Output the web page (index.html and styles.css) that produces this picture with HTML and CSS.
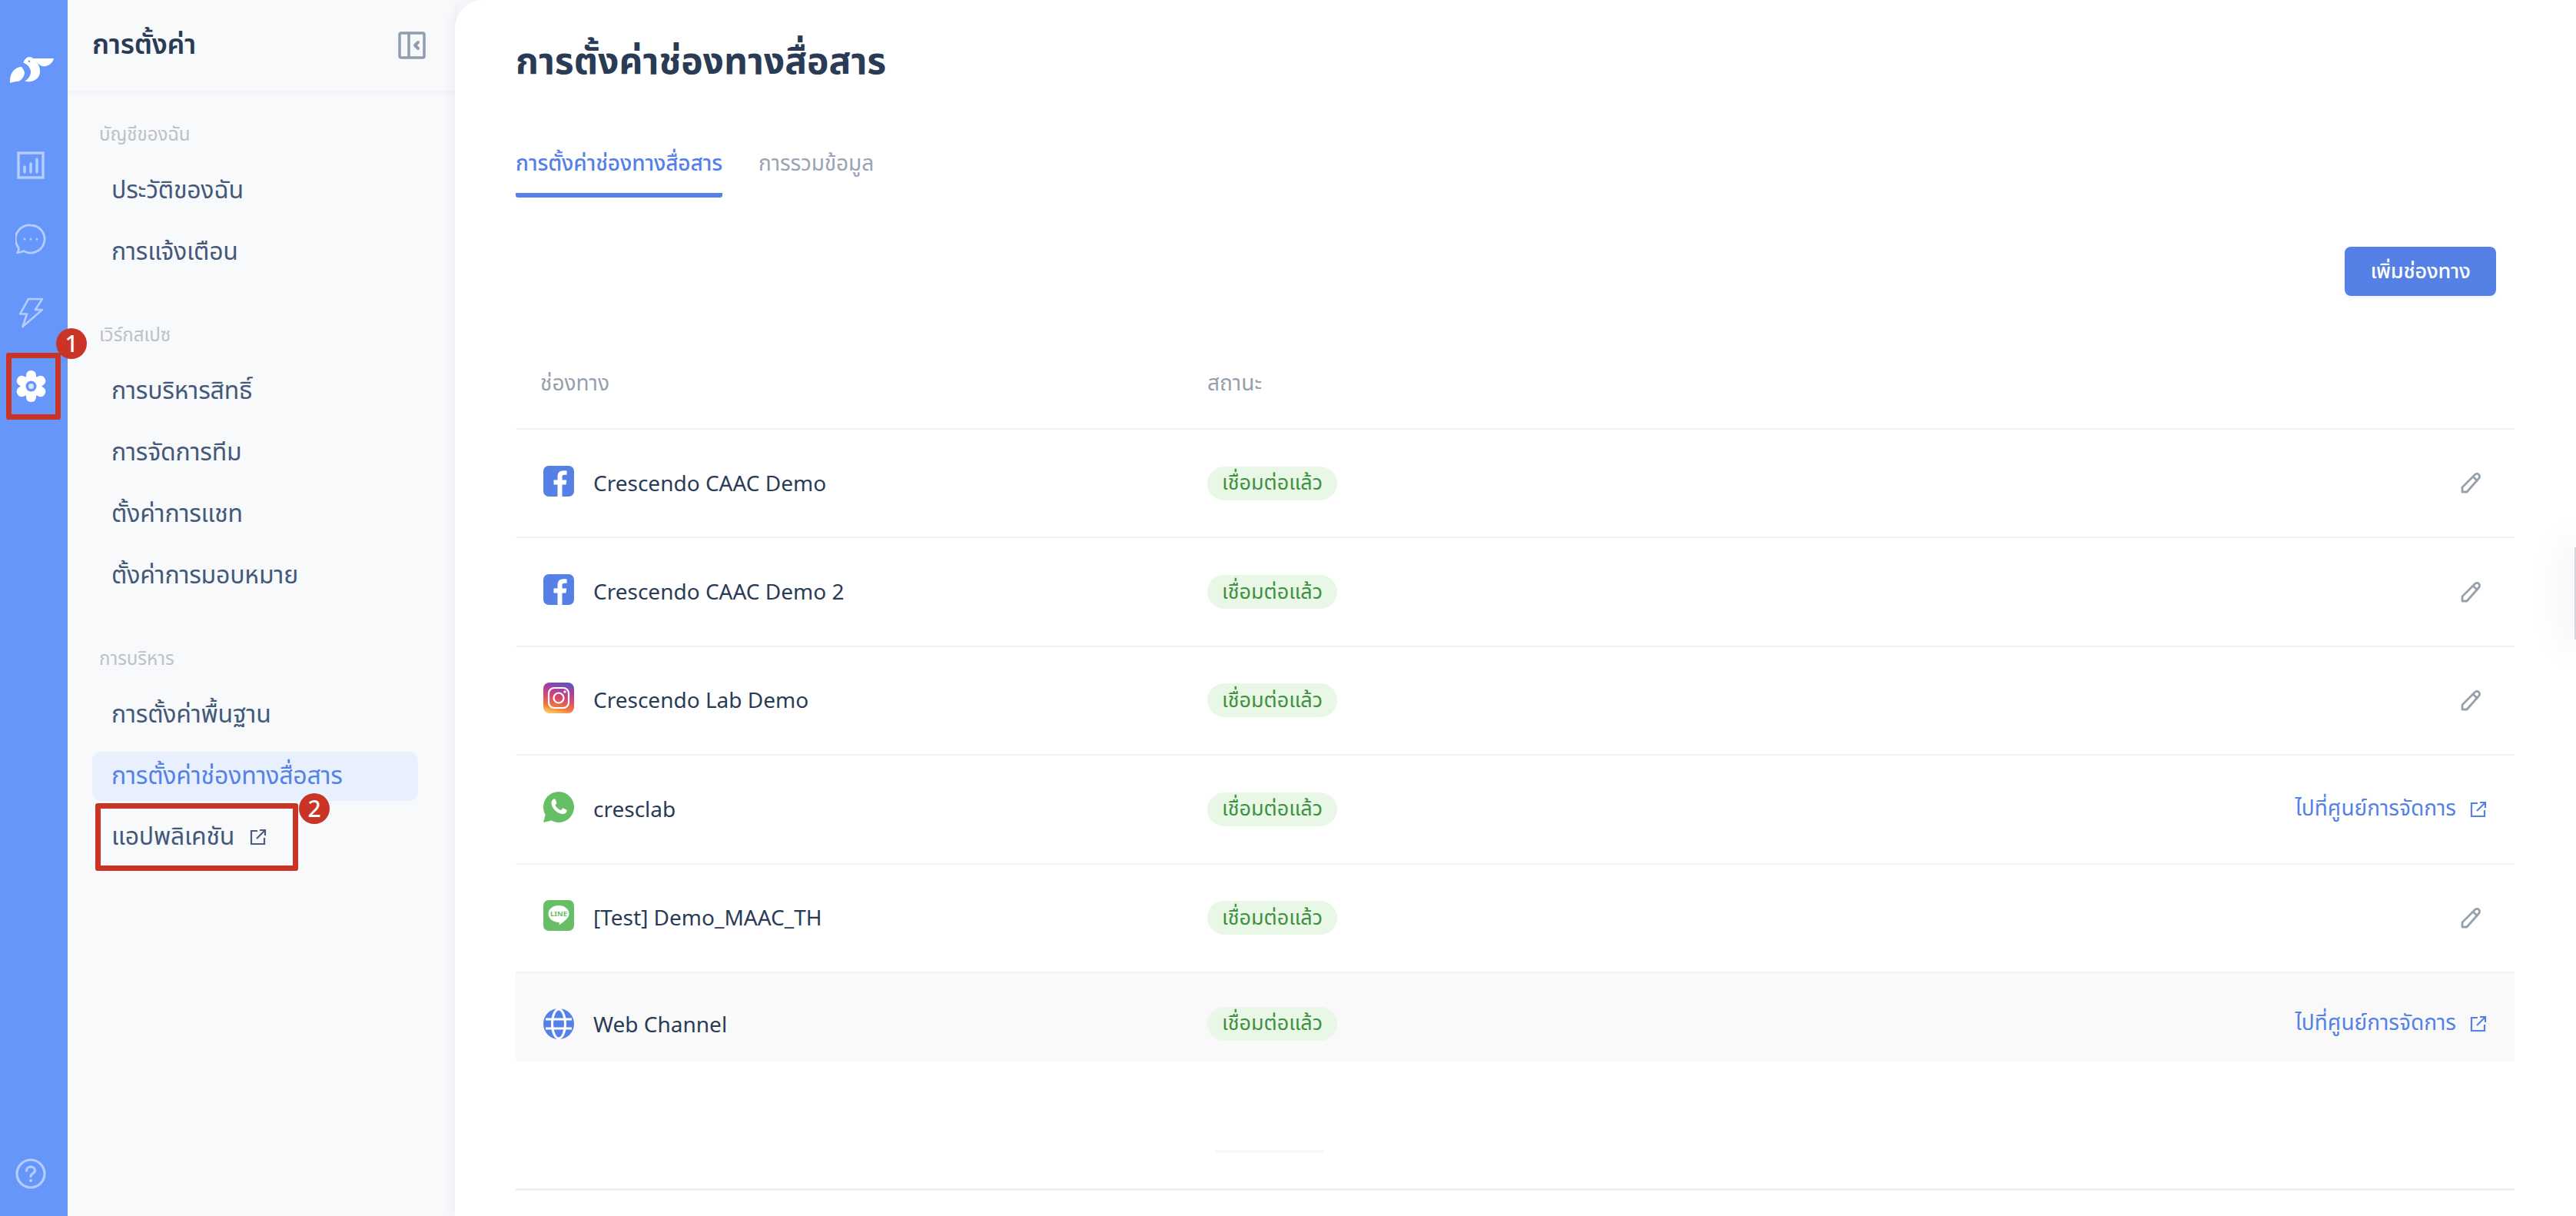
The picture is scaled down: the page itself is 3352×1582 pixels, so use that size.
FILE: index.html
```html
<!DOCTYPE html>
<html lang="th">
<head>
<meta charset="utf-8">
<title>การตั้งค่าช่องทางสื่อสาร</title>
<link rel="stylesheet" href="styles.css">
</head>
<body>
<div class="app">
  <nav class="rail">
    <svg class="logo" viewBox="0 0 57 34"><path fill="#fff" d="M0 34C-1 22 6 13 15 13c2 3 4 5 4 8-1 6-5 11-10 11-3 0-6 1-9 2z"/><path fill="#fff" fill-rule="evenodd" d="M17.500 7C19 3 22 0 25.500 0c2 0 3.500 1 4.500 2h27c-1 5-5 8.500-10 10-4 1-8 0-11.500-5 2 4 4 8 3.500 13-.5 6-5 11-12 12-3 .5-6 0-8-.6 4-2 7.500-6 8-11 .5-5-3-10-9.500-13zM25 4.500a1.300 1.300 0 1 0 0 2.600 1.300 1.300 0 0 0 0-2.600z"/></svg>
    <svg class="ico ico-chart" viewBox="0 0 36 36" fill="none" stroke="#b3cdfd"><rect x="2" y="2" width="32" height="32" stroke-width="3.500"/><path stroke-width="3.500" stroke-linecap="round" d="M10 20v7M18 16v11M26 10v17"/></svg>
    <svg class="ico ico-chat" viewBox="0 0 40 40" fill="none" stroke="#b3cdfd" stroke-width="2.800"><path d="M20 2a18 18 0 1 1-9 33.600c-2 1-5 2-8 2 1-2 1.500-4 1-6.500A18 18 0 0 1 20 2z"/><circle cx="12" cy="20" r="1.500" fill="#b3cdfd" stroke="none"/><circle cx="20" cy="20" r="1.500" fill="#b3cdfd" stroke="none"/><circle cx="28" cy="20" r="1.500" fill="#b3cdfd" stroke="none"/></svg>
    <svg class="ico ico-bolt" viewBox="0 0 31 41" fill="none" stroke="#b3cdfd" stroke-width="2.600" stroke-linejoin="round"><path d="M12 3h18l-9 14h9L4.500 39 10 22.500H1z"/></svg>
    <div class="rail-active">
      <svg class="ico-gear" viewBox="0 0 41 41"><g fill="#fff"><rect x="14" y="0" width="13" height="41" rx="6"/><rect x="14" y="0" width="13" height="41" rx="6" transform="rotate(60 20.500 20.500)"/><rect x="14" y="0" width="13" height="41" rx="6" transform="rotate(120 20.500 20.500)"/><circle cx="20.500" cy="20.500" r="14"/></g><circle cx="20.500" cy="20.500" r="7" fill="#6796fb"/><circle cx="20.500" cy="20.500" r="3.500" fill="#dbe6fe"/></svg>
    </div>
    <span class="marker marker-one">1</span>
    <svg class="ico ico-help" viewBox="0 0 40 40" fill="none" stroke="#b3cdfd" stroke-width="3.200"><circle cx="20" cy="20" r="18"/><path stroke-linecap="round" d="M14.500 16c0-3 2.500-5 5.500-5s5.500 2 5.500 5c0 3.500-5.500 3.500-5.500 7.500"/><circle cx="20" cy="29" r="2" fill="#b3cdfd" stroke="none"/></svg>
  </nav>

  <aside class="panel">
    <header class="panel-head">
      <h2 class="panel-title">การตั้งค่า</h2>
      <svg class="collapse" viewBox="0 0 36 36" fill="none" stroke="#8f9db0" stroke-width="3.500"><rect x="2" y="2" width="32" height="32" rx="2"/><path d="M14 2v32"/><path stroke-width="4" stroke-linecap="round" stroke-linejoin="round" d="M26 14l-4 4 4 4"/></svg>
    </header>
    <div class="panel-body">
      <section class="group">
        <h3 class="group-label">บัญชีของฉัน</h3>
        <a class="nav-item">ประวัติของฉัน</a>
        <a class="nav-item">การแจ้งเตือน</a>
      </section>
      <section class="group">
        <h3 class="group-label">เวิร์กสเปซ</h3>
        <a class="nav-item">การบริหารสิทธิ์</a>
        <a class="nav-item">การจัดการทีม</a>
        <a class="nav-item">ตั้งค่าการแชท</a>
        <a class="nav-item">ตั้งค่าการมอบหมาย</a>
      </section>
      <section class="group">
        <h3 class="group-label">การบริหาร</h3>
        <a class="nav-item">การตั้งค่าพื้นฐาน</a>
        <a class="nav-item nav-active">การตั้งค่าช่องทางสื่อสาร</a>
        <a class="nav-item nav-app">แอปพลิเคชัน
          <svg class="ext ext-nav" viewBox="0 0 22 22" fill="none" stroke="#4a5f7e" stroke-width="2.200"><path d="M10 3H2v17h17v-8"/><path d="M9 13L20 2M13 2h7v7"/></svg>
          <span class="marker marker-two">2</span>
        </a>
      </section>
    </div>
  </aside>

  <main class="main">
    <h1 class="page-title">การตั้งค่าช่องทางสื่อสาร</h1>
    <div class="tabs">
      <a class="tab tab-active">การตั้งค่าช่องทางสื่อสาร</a>
      <a class="tab">การรวมข้อมูล</a>
    </div>
    <div class="toolbar"><button class="btn">เพิ่มช่องทาง</button></div>
    <div class="table">
      <div class="row row-head">
        <div class="cell-name">ช่องทาง</div>
        <div class="cell-status">สถานะ</div>
      </div>
      <div class="row">
        <div class="cell-name">
          <svg class="brand" viewBox="0 0 40 40"><rect width="40" height="40" rx="7" fill="#5581e7"/><path fill="#fff" d="M24.500 40V24.500h5l.8-6h-5.800v-3.800c0-1.700.5-2.900 3-2.900h3.100V6.500c-.5-.1-2.400-.2-4.500-.2-4.500 0-7.600 2.700-7.600 7.800v4.400h-5v6h5V40z"/></svg>
          <span class="name">Crescendo CAAC Demo</span>
        </div>
        <div class="cell-status"><span class="badge">เชื่อมต่อแล้ว</span></div>
        <div class="cell-action"><svg class="pencil" viewBox="0 0 27 27" fill="none" stroke="#96a1ae" stroke-width="2.800" stroke-linejoin="round"><path d="M2 25v-6L18 3c2-2 4-2 5.500-.5s1.500 3.500-.5 5.500L8 25z"/><path d="M16 5l6 6"/></svg></div>
      </div>
      <div class="row">
        <div class="cell-name">
          <svg class="brand" viewBox="0 0 40 40"><rect width="40" height="40" rx="7" fill="#5581e7"/><path fill="#fff" d="M24.500 40V24.500h5l.8-6h-5.800v-3.800c0-1.700.5-2.900 3-2.900h3.100V6.500c-.5-.1-2.400-.2-4.500-.2-4.500 0-7.600 2.700-7.600 7.800v4.400h-5v6h5V40z"/></svg>
          <span class="name">Crescendo CAAC Demo 2</span>
        </div>
        <div class="cell-status"><span class="badge">เชื่อมต่อแล้ว</span></div>
        <div class="cell-action"><svg class="pencil" viewBox="0 0 27 27" fill="none" stroke="#96a1ae" stroke-width="2.800" stroke-linejoin="round"><path d="M2 25v-6L18 3c2-2 4-2 5.500-.5s1.500 3.500-.5 5.500L8 25z"/><path d="M16 5l6 6"/></svg></div>
      </div>
      <div class="row">
        <div class="cell-name">
          <svg class="brand" viewBox="0 0 40 40"><defs><linearGradient id="ig" x1=".35" y1="1" x2=".6" y2="0"><stop offset="0" stop-color="#fdc45f"/><stop offset=".2" stop-color="#ee7b3e"/><stop offset=".5" stop-color="#d9486e"/><stop offset=".8" stop-color="#a33fa8"/><stop offset="1" stop-color="#5b58b8"/></linearGradient></defs><rect width="40" height="40" rx="8" fill="url(#ig)"/><rect x="7" y="7" width="26" height="26" rx="7" fill="none" stroke="#fff" stroke-width="2.200"/><circle cx="20" cy="20" r="6.500" fill="none" stroke="#fff" stroke-width="2.200"/><circle cx="28" cy="12" r="1.700" fill="#fff"/></svg>
          <span class="name">Crescendo Lab Demo</span>
        </div>
        <div class="cell-status"><span class="badge">เชื่อมต่อแล้ว</span></div>
        <div class="cell-action"><svg class="pencil" viewBox="0 0 27 27" fill="none" stroke="#96a1ae" stroke-width="2.800" stroke-linejoin="round"><path d="M2 25v-6L18 3c2-2 4-2 5.500-.5s1.500 3.500-.5 5.500L8 25z"/><path d="M16 5l6 6"/></svg></div>
      </div>
      <div class="row">
        <div class="cell-name">
          <svg class="brand" viewBox="0 0 40 40"><path fill="#66bf64" d="M20 0a20 20 0 1 1-9.500 37.600L0 40l2.700-10A20 20 0 0 1 20 0z"/><path fill="#fff" d="M14 9.500c1 0 1.500.2 2 1.500l1.300 3c.3.800 0 1.300-.4 1.800l-1.100 1.300c-.3.400-.3.700 0 1.200 1.500 2.600 3.500 4.400 6.300 5.600.5.200.9.200 1.200-.2l1.400-1.700c.5-.6 1-.6 1.700-.3l3.100 1.500c.8.400 1.100.7 1 1.500-.1 2.700-2.500 4.300-5 4.300-7 0-14.500-7.200-15-13.500-.2-2.400.9-6 4.500-6.500z"/></svg>
          <span class="name">cresclab</span>
        </div>
        <div class="cell-status"><span class="badge">เชื่อมต่อแล้ว</span></div>
        <div class="cell-action"><a class="link">ไปที่ศูนย์การจัดการ<svg class="ext" viewBox="0 0 22 22" fill="none" stroke="#5581e7" stroke-width="2.200"><path d="M10 3H2v17h17v-8"/><path d="M9 13L20 2M13 2h7v7"/></svg></a></div>
      </div>
      <div class="row">
        <div class="cell-name">
          <svg class="brand" viewBox="0 0 40 40"><rect width="40" height="40" rx="7" fill="#66bf64"/><path fill="#fff" d="M20 7c7.500 0 13.500 4.800 13.500 10.800 0 5.500-6.500 10.200-12 14-.8.500-1.200.2-1-.7l.3-2.100C12.500 29 6.500 24 6.500 17.800 6.500 11.800 12.500 7 20 7z"/><text class="line-word" x="20" y="21" text-anchor="middle">LINE</text></svg>
          <span class="name">[Test] Demo_MAAC_TH</span>
        </div>
        <div class="cell-status"><span class="badge">เชื่อมต่อแล้ว</span></div>
        <div class="cell-action"><svg class="pencil" viewBox="0 0 27 27" fill="none" stroke="#96a1ae" stroke-width="2.800" stroke-linejoin="round"><path d="M2 25v-6L18 3c2-2 4-2 5.500-.5s1.500 3.500-.5 5.500L8 25z"/><path d="M16 5l6 6"/></svg></div>
      </div>
      <div class="row row-hover">
        <div class="cell-name">
          <svg class="brand" viewBox="0 0 40 40"><circle cx="20" cy="20" r="20" fill="#5581e7"/><g fill="none" stroke="#fff" stroke-width="3"><ellipse cx="20" cy="20" rx="8.500" ry="19"/><path d="M3 14h34M3 26h34"/></g></svg>
          <span>Web Channel</span>
        </div>
        <div class="cell-status"><span class="badge">เชื่อมต่อแล้ว</span></div>
        <div class="cell-action"><a class="link">ไปที่ศูนย์การจัดการ<svg class="ext" viewBox="0 0 22 22" fill="none" stroke="#5581e7" stroke-width="2.200"><path d="M10 3H2v17h17v-8"/><path d="M9 13L20 2M13 2h7v7"/></svg></a></div>
      </div>
      <div class="table-end"><span class="ghost"></span></div>
    </div>
  </main>
  <div class="edge-tab"></div>
</div>
</body>
</html>
```
FILE: styles.css
```css
* { box-sizing: border-box; }
html, body { margin: 0; height: 100%; overflow: hidden; }
body { font-family: "Noto Sans", "Noto Sans Thai", "Open Sans", "DejaVu Sans", sans-serif; background: #f8f9fb; color: #2a3b56; }
h1, h2, h3 { margin: 0; }

.app { display: flex; width: 3352px; height: 1582px; position: relative; overflow: hidden; }

.rail { width: 88px; flex: none; background: #6796fb; display: flex; flex-direction: column; align-items: center; position: relative; padding: 74px 8px 0 0; }
.logo { width: 57px; height: 34px; margin-left: 3px; flex: none; }
.ico { display: block; flex: none; }
.ico-chart { width: 36px; height: 36px; margin-top: 89px; }
.ico-chat { width: 40px; height: 40px; margin-top: 58px; }
.ico-bolt { width: 31px; height: 41px; margin-top: 55px; }
.rail-active { width: 71px; height: 87px; margin-top: 32px; margin-left: 7px; border: 7px solid #c93426; border-radius: 3px; display: flex; align-items: center; justify-content: center; flex: none; }
.ico-gear { width: 41px; height: 41px; margin-right: 7px; }
.ico-help { width: 40px; height: 40px; margin-top: auto; margin-bottom: 35px; }

.marker { position: absolute; width: 40px; height: 40px; border-radius: 50%; background: #c93426; color: #fff; font-size: 30px; line-height: 40px; text-align: center; font-weight: 500; z-index: 3; }
.marker-one { left: 73px; top: 427px; }
.marker-two { left: 258px; top: -20px; }

.panel { width: 504px; flex: none; background: #f8f9fb; display: flex; flex-direction: column; }
.panel-head { height: 118px; flex: none; display: flex; align-items: center; justify-content: space-between; padding: 0 38px 0 32px; box-shadow: 0 2px 6px rgba(40, 60, 90, .04); }
.panel-title { font-size: 36px; font-weight: 600; letter-spacing: -.3px; color: #2a3b56; line-height: 1; margin-bottom: 4px; }
.collapse { width: 36px; height: 36px; }
.panel-body { padding: 32px 48px 0 32px; display: flex; flex-direction: column; gap: 51px; }
.group { display: flex; flex-direction: column; }
.group-label { font-size: 24px; font-weight: 400; color: #bcc1c9; height: 48px; line-height: 48px; margin: 0 0 6px 9px; }
.nav-item { height: 64px; margin-top: 16px; display: flex; align-items: center; padding-left: 25px; border-radius: 12px; font-size: 32px; letter-spacing: -.2px; color: #44597a; position: relative; }
.group-label + .nav-item { margin-top: 12px; }
.nav-active { color: #5581e7; background: #e8f0fe; }
.nav-app { width: 264px; height: 88px; margin-top: 3px; margin-left: 4px; padding-left: 14px; border: 7px solid #c93426; border-radius: 3px; white-space: nowrap; }
.ext { width: 22px; height: 22px; flex: none; margin-left: 18px; }
.ext-nav { margin-left: 20px; }

.main { flex: 1; background: #fff; border-top-left-radius: 36px; padding: 38px 0 0 79px; box-shadow: -4px 0 14px rgba(40, 60, 90, .05); min-width: 0; }
.page-title { font-size: 48px; font-weight: 700; color: #2a3b56; line-height: 80px; height: 80px; }
.tabs { display: flex; gap: 47px; margin-top: 48px; }
.tab { font-size: 28px; letter-spacing: -.1px; color: #99a3b3; height: 91px; line-height: 90px; white-space: nowrap; }
.tab-active { color: #5581e7; border-bottom: 6px solid #5581e7; border-radius: 0 0 3px 3px; font-weight: 500; }
.toolbar { width: 2601px; display: flex; justify-content: flex-end; padding-right: 24px; margin-top: 64px; }
.btn { width: 197px; height: 64px; border: 0; border-radius: 8px; background: #5581e7; color: #fff; font: 500 27px "Noto Sans", "Noto Sans Thai", sans-serif; letter-spacing: -.2px; box-shadow: 0 3px 6px rgba(85, 129, 231, .08); }

.table { width: 2601px; margin-top: 32px; }
.row { height: 141.400px; display: flex; align-items: center; border-top: 2px solid #f1f2f4; padding-left: 36px; font-size: 28px; color: #2a3b56; }
.row-head { height: 140px; border-top: 0; padding: 25px 0 0 32px; color: #959fae; font-size: 28px; }
.cell-name { width: 864px; flex: none; display: flex; align-items: center; gap: 25px; }
.row-head .cell-name { width: 868px; }
.brand { width: 40px; height: 40px; flex: none; margin-bottom: 6px; }
.name { margin-bottom: 2px; }
.line-word { font: 700 9.500px "Noto Sans", sans-serif; fill: #66bf64; }
.cell-status { flex: 1; display: flex; align-items: center; }
.badge { display: inline-flex; align-items: center; justify-content: center; width: 169px; height: 44px; border-radius: 22px; background: #e9f7e6; color: #3f9141; font-size: 27px; }
.cell-action { display: flex; align-items: center; justify-content: flex-end; padding-right: 36px; }
.pencil { width: 27px; height: 27px; margin-right: 7px; }
.link { display: flex; align-items: center; color: #5581e7; font-size: 28px; white-space: nowrap; }
.row-hover { height: 117px; background: #f9f9fa; align-items: flex-start; padding-top: 44px; }
.row-hover > div { height: 44px; }
.row-hover .brand { margin-bottom: 0; }
.table-end { height: 168px; border-bottom: 3px solid #eeeff1; padding: 115px 0 0 910px; }
.ghost { display: block; width: 142px; height: 4px; background: #f7f7fa; }
.edge-tab { position: absolute; right: -4px; top: 712px; width: 6px; height: 120px; background: #d5d7da; box-shadow: 0 0 50px 12px rgba(40, 40, 50, .06); }
```
